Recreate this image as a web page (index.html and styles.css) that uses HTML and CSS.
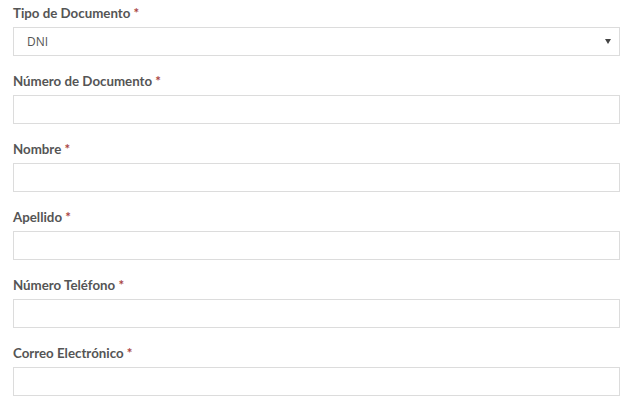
FILE: index.html
```html
<!DOCTYPE html>
<html lang="es">
<head>
<meta charset="utf-8">
<link rel="stylesheet" href="styles.css">
</head>
<body>
<form class="form">
  <div class="field">
    <label class="label">Tipo de Documento <span class="req">*</span></label>
    <div class="select">
      <span class="select-value">DNI</span>
      <span class="arrow"></span>
    </div>
  </div>
  <div class="field">
    <label class="label">Número de Documento <span class="req">*</span></label>
    <div class="input"></div>
  </div>
  <div class="field">
    <label class="label">Nombre <span class="req">*</span></label>
    <div class="input"></div>
  </div>
  <div class="field">
    <label class="label">Apellido <span class="req">*</span></label>
    <div class="input"></div>
  </div>
  <div class="field">
    <label class="label">Número Teléfono <span class="req">*</span></label>
    <div class="input"></div>
  </div>
  <div class="field">
    <label class="label">Correo Electrónico <span class="req">*</span></label>
    <div class="input"></div>
  </div>
</form>
</body>
</html>
```
FILE: styles.css
```css
html, body {
  margin: 0;
  padding: 0;
  background: #fff;
}
.form {
  width: 607px;
  padding: 5px 0 0 13px;
  display: flex;
  flex-direction: column;
  gap: 17px;
}
.field {
  display: flex;
  flex-direction: column;
  gap: 5px;
}
.label {
  font-family: Lato, "Open Sans", sans-serif;
  font-weight: 700;
  font-size: 13.3px;
  line-height: 17px;
  color: #555;
}
.req {
  color: #a94442;
}
.select, .input {
  box-sizing: border-box;
  height: 29px;
  border: 1px solid #dcdcdc;
  background: #fff;
}
.select {
  display: flex;
  align-items: center;
  justify-content: space-between;
  padding: 0 8px 0 13px;
}
.select-value {
  font-family: "Open Sans", "Noto Sans", sans-serif;
  font-size: 12px;
  color: #555;
}
.arrow {
  width: 0;
  height: 0;
  border-left: 3px solid transparent;
  border-right: 3px solid transparent;
  border-top: 5px solid #444;
}
```
